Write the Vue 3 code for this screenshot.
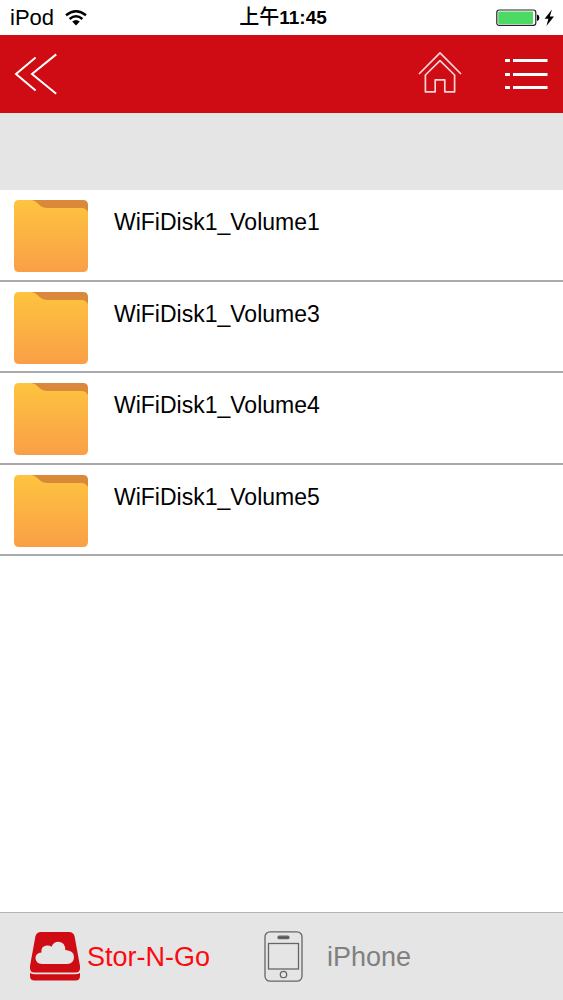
<script setup>
import { ref } from 'vue'

const volumes = ['WiFiDisk1_Volume1', 'WiFiDisk1_Volume3', 'WiFiDisk1_Volume4', 'WiFiDisk1_Volume5']
const active = ref('storage')
</script>

<template>
  <div class="screen">
    <div class="status">
      <div class="carrier">
        <span>iPod</span>
        <svg width="22" height="16" viewBox="0 0 22 16" aria-hidden="true">
          <g fill="none" stroke="#000" stroke-width="2.4">
            <path d="M1 5.2Q11 -2.8 21 5.2" />
            <path d="M4.6 9Q11 3.6 17.4 9" />
          </g>
          <path d="M7.2 11.6Q11 8.6 14.8 11.6L11 15.6Z" />
        </svg>
      </div>
      <time class="clock">上午<b>11:45</b></time>
      <div class="power">
        <svg width="60" height="18" viewBox="0 0 60 18" aria-hidden="true">
          <rect x=".8" y="1" width="39" height="15.4" rx="2.4" fill="#fff" stroke="#222" stroke-width="1.2" />
          <rect x="2.2" y="2.4" width="34.8" height="12.6" rx="1" fill="#4cd964" />
          <path d="M41 5.6Q43.4 6 43.4 8.8T41 12Z" />
          <path d="M56 .6L48.6 9.8H52.4L50.4 17L58 7.4H53.8Z" />
        </svg>
      </div>
    </div>

    <header class="bar">
      <button type="button" class="icon-button" aria-label="Back">
        <svg width="44" height="42" viewBox="0 0 44 42" fill="none" stroke="#fff" stroke-width="2">
          <path d="M21.6 4.6L2 21L21.6 37.4" />
          <path d="M42.2 1.4L18 21L42.2 40.800" />
        </svg>
      </button>
      <div class="actions">
        <button type="button" class="icon-button" aria-label="Home">
          <svg width="44" height="42" viewBox="0 0 44 42" fill="none" stroke="#fbd5d6" stroke-width="1.7" stroke-linejoin="round">
            <path d="M1 21L22 -.2L43 21" />
            <path d="M7.4 22V38.8H17.2V26.8H26.8V38.8H36.6V22L22 7.6Z" />
          </svg>
        </button>
        <button type="button" class="icon-button" aria-label="Menu">
          <svg width="43" height="42" viewBox="0 0 43 42" fill="#fff">
            <path d="M0 6h5v3H0zM8 6h34.5v3H8zM0 20h5v3H0zM8 20h34.5v3H8zM0 33h5v3H0zM8 33h34.5v3H8z" />
          </svg>
        </button>
      </div>
    </header>

    <div class="band"></div>

    <main class="content">
      <ul class="list">
        <li v-for="name in volumes" :key="name" class="row">
          <svg width="74" height="72" viewBox="0 0 74 72" aria-hidden="true">
            <defs>
              <linearGradient id="folder-fill" x1="0" y1="0" x2="0" y2="1">
                <stop offset="0" stop-color="#fec43f" />
                <stop offset="1" stop-color="#f99f47" />
              </linearGradient>
            </defs>
            <path d="M15 0H69Q74 0 74 5V20H15Z" fill="#d98939" />
            <path d="M5 0H17Q19.5 0 21.5 1.5L27 6.3Q29.5 8 33 8H68Q71.5 8 74 12V67Q74 72 69 72H5Q0 72 0 67V5Q0 0 5 0Z" fill="url(#folder-fill)" />
          </svg>
          <span class="name">{{ name }}</span>
        </li>
      </ul>
    </main>

    <nav class="tabs">
      <button type="button" class="tab storage" :class="{ active: active === 'storage' }" @click="active = 'storage'">
        <svg width="50" height="50" viewBox="0 0 50 50" aria-hidden="true">
          <path d="M11 0H39Q43.6 0 44.6 4.500L50 34V36Q50 40.5 45.5 40.5H4.5Q0 40.5 0 36V34L5.4 4.500Q6.4 0 11 0Z" fill="#cf0b13" />
          <path d="M0 41Q2 42.2 5 42.2H45Q48 42.2 50 41V44Q50 48.500 45.5 48.500H4.5Q0 48.500 0 44Z" fill="#cf0b13" />
          <path d="M12 32Q5.5 31.5 5.500 26Q5.5 21 11.500 20.500Q10.8 14 16.5 13.5Q19.500 13.100 21.500 14.800Q23.500 9.800 28.4 9.800Q35.3 10.300 35.300 18Q44 18.5 44 25Q44 31.5 37 32Z" fill="#e5e5e5" />
        </svg>
        <span>Stor-N-Go</span>
      </button>
      <button type="button" class="tab phone" :class="{ active: active === 'phone' }" @click="active = 'phone'">
        <svg width="39" height="51" viewBox="0 0 39 51" fill="none" stroke="#666" stroke-width="1.3" aria-hidden="true">
          <rect x="1" y=".8" width="37" height="49.4" rx="5" />
          <rect x="4.5" y="12.5" width="30" height="25.5" />
          <rect x="14" y="5.2" width="11" height="2.4" rx="1.2" fill="#555" />
          <circle cx="19.5" cy="43.5" r="3.2" />
        </svg>
        <span>iPhone</span>
      </button>
    </nav>
  </div>
</template>

<style>
body {
  background: #fff;
}
</style>

<style scoped>
.screen {
  display: flex;
  flex-direction: column;
  min-height: 100vh;
  color: #000;
  font-family: "Liberation Sans", "Noto Sans CJK SC", sans-serif;
}

.status {
  display: grid;
  grid-template-columns: 1fr auto 1fr;
  align-items: center;
  height: 35px;
  padding: 0 7px 0 10px;
  box-sizing: border-box;
  font-size: 22px;
  line-height: 35px;
}

.carrier {
  display: flex;
  align-items: center;
  gap: 11px;
}

.clock {
  font-size: 20px;
  font-weight: 500;
}

.clock b {
  font-size: 19px;
}

.power {
  display: flex;
  justify-content: flex-end;
}

.bar {
  display: flex;
  align-items: center;
  justify-content: space-between;
  height: 78px;
  padding: 0 15px 0 14px;
  box-sizing: border-box;
  background: #cf0b13;
}

.actions {
  display: flex;
  gap: 43px;
}

.icon-button,
.tab {
  padding: 0;
  border: 0;
  background: none;
  font: inherit;
  cursor: pointer;
}

svg {
  display: block;
  flex: none;
  overflow: visible;
}

.band {
  height: 77px;
  background: #e5e5e5;
}

.content {
  flex: 1;
}

.list {
  display: grid;
  grid-auto-rows: 1fr;
  min-height: 366px;
  margin: 0;
  padding: 0;
  list-style: none;
}

.row {
  display: flex;
  gap: 26px;
  padding: 10px 14px 0;
  border-bottom: 2px solid #aaa;
}

.name {
  padding-top: 8px;
  font-size: 23px;
  line-height: 28px;
}

.tabs {
  display: flex;
  gap: 54px;
  height: 88px;
  padding: 0 30px;
  box-sizing: border-box;
  border-top: 1px solid #b4b4b4;
  background: #e5e5e5;
}

.tab {
  display: flex;
  align-items: center;
  color: #808080;
  font-size: 27px;
  line-height: 32px;
}

.tab.active {
  color: #fb0a10;
}

.storage {
  gap: 7px;
}

.phone {
  gap: 24px;
}
</style>
